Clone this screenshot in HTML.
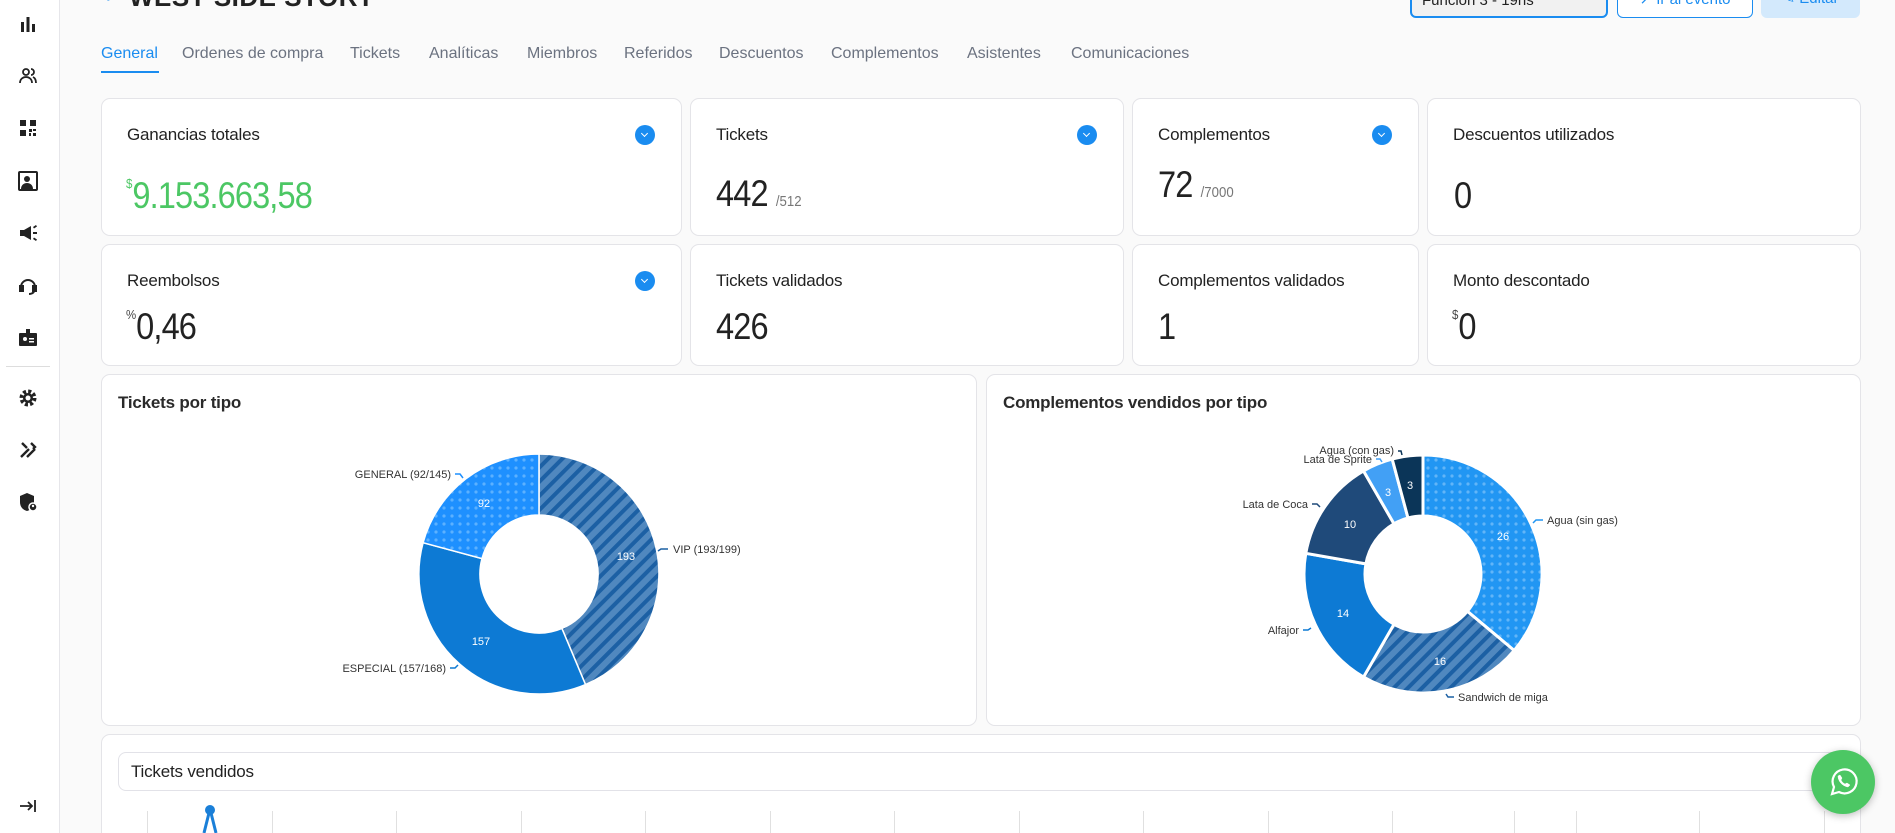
<!DOCTYPE html>
<html style="width:1895px;height:833px;overflow:hidden"><head><meta charset="utf-8">
<style>
*{box-sizing:border-box;margin:0;padding:0}
body{width:1895px;height:833px;overflow:hidden;background:#fafafa;font-family:"Liberation Sans",sans-serif;position:relative;color:#1f2328}
.sb{position:absolute;left:0;top:0;width:60px;height:833px;background:#fff;border-right:1px solid #e6e6ea}
.ic{position:absolute;left:18px;width:20px;height:20px}
.card{position:absolute;background:#fff;border:1px solid #e4e4e8;border-radius:9px}
.t{position:absolute;font-size:17px;color:#222;letter-spacing:-0.2px}
.chev{position:absolute;width:20px;height:20px;border-radius:50%;background:#1a8cf0}
.chev:after{content:"";position:absolute;left:7px;top:6px;width:4px;height:4px;border-right:1.8px solid #fff;border-bottom:1.8px solid #fff;transform:rotate(45deg)}
.v{position:absolute;font-size:37px;color:#222;letter-spacing:-1px;line-height:1;transform:scaleX(0.88);transform-origin:left top;white-space:nowrap}
.s{font-size:15px;color:#777;letter-spacing:0}
.tab{position:absolute;top:45px;font-size:16px;color:#6b7280}
.lbl{font-family:"Liberation Sans",sans-serif;font-size:11px;fill:#333}
.in{font-family:"Liberation Sans",sans-serif;font-size:11px;fill:#fff}
.btn{position:absolute;top:-12px;height:30px;border-radius:6px;font-size:15px;line-height:22px;overflow:hidden}
</style></head><body>
<div class="sb">
<svg class="ic" style="top:14px" viewBox="0 0 20 20"><rect x="3" y="8" width="3" height="10" fill="#222"/><rect x="8.5" y="3" width="3" height="15" fill="#222"/><rect x="14" y="10" width="3" height="8" fill="#222"/></svg>
<svg class="ic" style="top:66px" viewBox="0 0 20 20" fill="none" stroke="#222" stroke-width="1.8"><circle cx="8" cy="6" r="3"/><path d="M2 17c0-4 3-6 6-6s6 2 6 6"/><path d="M13 3a3 3 0 0 1 0 6M15 11c2 1 3 3 3 6"/></svg>
<svg class="ic" style="top:118px" viewBox="0 0 20 20" fill="#222"><rect x="2" y="2" width="6" height="6"/><rect x="12" y="2" width="6" height="6"/><rect x="2" y="12" width="6" height="6"/><rect x="11" y="11" width="3" height="3"/><rect x="15" y="15" width="3" height="3"/><rect x="15" y="11" width="3" height="2"/><rect x="11" y="15" width="2" height="3"/></svg>
<svg class="ic" style="top:171px" viewBox="0 0 20 20"><rect x="1" y="1" width="18" height="18" rx="1" fill="none" stroke="#222" stroke-width="2"/><circle cx="9" cy="8" r="3" fill="#222"/><path d="M3 18c0-4 3-6 6-6s6 2 6 6z" fill="#222"/></svg>
<svg class="ic" style="top:223px" viewBox="0 0 20 20" fill="#222"><path d="M2 7h4l7-4v14l-7-4H2z"/><rect x="15" y="9" width="4" height="2"/><path d="M15 4l3-2 1 1.5-3 2zM15 16l3 2 1-1.5-3-2z"/></svg>
<svg class="ic" style="top:275px" viewBox="0 0 20 20" fill="none" stroke="#222" stroke-width="2"><path d="M3 12a7 7 0 0 1 14 0"/><rect x="2" y="11" width="3" height="5" fill="#222"/><rect x="15" y="11" width="3" height="5" fill="#222"/><path d="M16 16c0 2-3 3-5 3"/></svg>
<svg class="ic" style="top:327px" viewBox="0 0 20 20" fill="#222"><rect x="1" y="6" width="18" height="13" rx="1"/><rect x="8" y="2" width="4" height="6"/><circle cx="7" cy="12" r="2" fill="#fff"/><rect x="11" y="11" width="5" height="1.5" fill="#fff"/><rect x="11" y="14" width="5" height="1.5" fill="#fff"/></svg>
<div style="position:absolute;left:6px;top:366px;width:44px;height:1px;background:#ddd"></div>
<svg class="ic" style="top:388px" viewBox="0 0 20 20"><circle cx="10" cy="10" r="6.5" fill="none" stroke="#222" stroke-width="4" stroke-dasharray="3 2.1"/><circle cx="10" cy="10" r="5" fill="#222"/><circle cx="10" cy="10" r="2.5" fill="#fff"/></svg>
<svg class="ic" style="top:440px" viewBox="0 0 20 20" fill="none" stroke="#222" stroke-width="2.4"><path d="M3 17L11 9M9 17L17 9M4 3l5 5M13 3l4 4-2 2"/></svg>
<svg class="ic" style="top:492px" viewBox="0 0 20 20"><path d="M9 1L2 4v6c0 5 3 8 7 9 4-1 7-4 7-9V4z" fill="#222"/><circle cx="15" cy="15" r="4" fill="#222" stroke="#fff" stroke-width="1.5"/><circle cx="15" cy="14" r="1.2" fill="#fff"/></svg>
<svg class="ic" style="top:796px" viewBox="0 0 20 20" fill="none" stroke="#222" stroke-width="1.8"><path d="M2 10h12M10 6l4 4-4 4M17 4v12"/></svg>
</div>

<div style="position:absolute;left:103px;top:-18px;font-size:22px;color:#1a8cf0">‹</div>
<div style="position:absolute;left:129px;top:-18px;font-size:26px;font-weight:bold;color:#222;letter-spacing:0.5px">WEST SIDE STORY</div>
<div class="btn" style="left:1410px;width:198px;border:2px solid #1a8cf0;background:#f1f1f1;padding:0 10px;color:#222">Función 3 - 19hs</div>
<div class="btn" style="left:1617px;width:136px;border:1px solid #1a8cf0;background:#fff;text-align:center;color:#1a8cf0">↗ Ir al evento</div>
<div class="btn" style="left:1761px;width:99px;background:#d3e9fc;text-align:center;color:#1a8cf0">✎ Editar</div>

<div class="tab" style="left:101px;color:#1a8cf0">General</div>
<div style="position:absolute;left:101px;top:71px;width:58px;height:2px;background:#1a8cf0"></div>
<div class="tab" style="left:182px">Ordenes de compra</div>
<div class="tab" style="left:350px">Tickets</div>
<div class="tab" style="left:429px">Analíticas</div>
<div class="tab" style="left:527px">Miembros</div>
<div class="tab" style="left:624px">Referidos</div>
<div class="tab" style="left:719px">Descuentos</div>
<div class="tab" style="left:831px">Complementos</div>
<div class="tab" style="left:967px">Asistentes</div>
<div class="tab" style="left:1071px">Comunicaciones</div>

<div class="card" style="left:101px;top:98px;width:581px;height:138px">
 <div class="t" style="left:25px;top:26px">Ganancias totales</div><div class="chev" style="left:533px;top:26px"></div>
 <div class="v" style="left:24px;top:78px;color:#4cc764"><span class="s" style="color:#4cc764;vertical-align:top;font-size:13px">$</span>9.153.663,58</div>
</div>
<div class="card" style="left:690px;top:98px;width:434px;height:138px">
 <div class="t" style="left:25px;top:26px">Tickets</div><div class="chev" style="left:386px;top:26px"></div>
 <div class="v" style="left:25px;top:76px">442 <span class="s">/512</span></div>
</div>
<div class="card" style="left:1132px;top:98px;width:287px;height:138px">
 <div class="t" style="left:25px;top:26px">Complementos</div><div class="chev" style="left:239px;top:26px"></div>
 <div class="v" style="left:25px;top:67px">72 <span class="s">/7000</span></div>
</div>
<div class="card" style="left:1427px;top:98px;width:434px;height:138px">
 <div class="t" style="left:25px;top:26px">Descuentos utilizados</div>
 <div class="v" style="left:26px;top:78px">0</div>
</div>

<div class="card" style="left:101px;top:244px;width:581px;height:122px">
 <div class="t" style="left:25px;top:26px">Reembolsos</div><div class="chev" style="left:533px;top:26px"></div>
 <div class="v" style="left:24px;top:63px"><span class="s" style="vertical-align:top;font-size:13px;color:#444">%</span>0,46</div>
</div>
<div class="card" style="left:690px;top:244px;width:434px;height:122px">
 <div class="t" style="left:25px;top:26px">Tickets validados</div>
 <div class="v" style="left:25px;top:63px">426</div>
</div>
<div class="card" style="left:1132px;top:244px;width:287px;height:122px">
 <div class="t" style="left:25px;top:26px">Complementos validados</div>
 <div class="v" style="left:25px;top:63px">1</div>
</div>
<div class="card" style="left:1427px;top:244px;width:434px;height:122px">
 <div class="t" style="left:25px;top:26px">Monto descontado</div>
 <div class="v" style="left:24px;top:63px"><span class="s" style="vertical-align:top;font-size:13px;color:#444">$</span>0</div>
</div>

<div class="card" style="left:101px;top:374px;width:876px;height:352px">
 <div class="t" style="left:16px;top:18px;font-weight:bold;color:#2a2a2a">Tickets por tipo</div>
</div>
<div class="card" style="left:986px;top:374px;width:875px;height:352px">
 <div class="t" style="left:16px;top:18px;font-weight:bold;color:#2a2a2a">Complementos vendidos por tipo</div>
</div>

<svg style="position:absolute;left:0;top:0" width="1895" height="833">
<defs>
<pattern id="dots" width="8" height="8" patternUnits="userSpaceOnUse"><rect width="8" height="8" fill="#1e90ff"/><circle cx="4" cy="4" r="1.6" fill="#5cb1ff"/></pattern>
<pattern id="dots2" width="8" height="8" patternUnits="userSpaceOnUse"><rect width="8" height="8" fill="#2196f3"/><circle cx="4" cy="4" r="1.6" fill="#62b5f8"/></pattern>
<pattern id="str" width="10" height="10" patternUnits="userSpaceOnUse" patternTransform="rotate(-45)"><rect width="10" height="10" fill="#5088bf"/><rect width="10" height="4" fill="#1c60a4"/></pattern>
</defs>
<g stroke="#fff" stroke-width="1.5">
<path d="M539,454 A120,120 0 0 1 585.5,684.6 L561.9,628.4 A59,59 0 0 0 539,515 Z" fill="url(#str)"/>
<path d="M585.5,684.6 A120,120 0 0 1 423.1,542.7 L482,558.6 A59,59 0 0 0 561.9,628.4 Z" fill="#0d7ad4"/>
<path d="M423.1,542.7 A120,120 0 0 1 539,454 L539,515 A59,59 0 0 0 482,558.6 Z" fill="url(#dots)"/>
</g>
<text class="in" x="484" y="507" text-anchor="middle">92</text>
<text class="in" x="626" y="560" text-anchor="middle">193</text>
<text class="in" x="481" y="645" text-anchor="middle">157</text>
<text class="lbl" x="451" y="478" text-anchor="end">GENERAL (92/145)</text>
<text class="lbl" x="673" y="553">VIP (193/199)</text>
<text class="lbl" x="446" y="672" text-anchor="end">ESPECIAL (157/168)</text>
<path d="M455,474h5l3,4" stroke="#1e90ff" stroke-width="1.5" fill="none"/>
<path d="M668,549h-7l-3,2" stroke="#1c60a4" stroke-width="1.5" fill="none"/>
<path d="M450,668h5l3,-3" stroke="#0d7ad4" stroke-width="1.5" fill="none"/>

<g stroke="#fff" stroke-width="3">
<path d="M1423,455 A119,119 0 0 1 1514.2,650.5 L1467.4,611.3 A58,58 0 0 0 1423,516 Z" fill="url(#dots2)"/>
<path d="M1514.2,650.5 A119,119 0 0 1 1363.5,677.1 L1394,624.2 A58,58 0 0 0 1467.4,611.3 Z" fill="url(#str)"/>
<path d="M1363.5,677.1 A119,119 0 0 1 1305.8,553.3 L1365.9,563.9 A58,58 0 0 0 1394,624.2 Z" fill="#0d7ad4"/>
<path d="M1305.8,553.3 A119,119 0 0 1 1363.5,470.9 L1394,523.8 A58,58 0 0 0 1365.9,563.9 Z" fill="#1f4a7a"/>
<path d="M1363.5,470.9 A119,119 0 0 1 1392.2,459.1 L1408,518 A58,58 0 0 0 1394,523.8 Z" fill="#42a0f5"/>
<path d="M1392.2,459.1 A119,119 0 0 1 1423,455 L1423,516 A58,58 0 0 0 1408,518 Z" fill="#0b3558"/>
</g>
<text class="in" x="1503" y="540" text-anchor="middle">26</text>
<text class="in" x="1440" y="665" text-anchor="middle">16</text>
<text class="in" x="1343" y="617" text-anchor="middle">14</text>
<text class="in" x="1350" y="528" text-anchor="middle">10</text>
<text class="in" x="1388" y="496" text-anchor="middle">3</text>
<text class="in" x="1410" y="489" text-anchor="middle">3</text>
<text class="lbl" x="1547" y="524">Agua (sin gas)</text>
<text class="lbl" x="1458" y="701">Sandwich de miga</text>
<text class="lbl" x="1299" y="634" text-anchor="end">Alfajor</text>
<text class="lbl" x="1308" y="508" text-anchor="end">Lata de Coca</text>
<text class="lbl" x="1372" y="463" text-anchor="end">Lata de Sprite</text>
<text class="lbl" x="1394" y="454" text-anchor="end">Agua (con gas)</text>
<path d="M1543,520h-7l-3,3" stroke="#2196f3" stroke-width="1.5" fill="none"/>
<path d="M1454,697h-6l-2,-3" stroke="#1c60a4" stroke-width="1.5" fill="none"/>
<path d="M1303,630h5l3,-2" stroke="#0d7ad4" stroke-width="1.5" fill="none"/>
<path d="M1312,504h5l3,3" stroke="#1f4a7a" stroke-width="1.5" fill="none"/>
<path d="M1376,459h4l2,3" stroke="#42a0f5" stroke-width="1.5" fill="none"/>
<path d="M1398,451h3l1,4" stroke="#0b3558" stroke-width="1.5" fill="none"/>
</svg>

<div class="card" style="left:101px;top:734px;width:1760px;height:110px">
 <div style="position:absolute;left:16px;top:17px;width:1733px;height:39px;border:1px solid #e2e2e8;border-radius:8px"></div>
 <div class="t" style="left:29px;top:27px">Tickets vendidos</div>
</div>
<svg style="position:absolute;left:0;top:805px" width="1895" height="28">
<g stroke="#e0e0e0" stroke-width="1">
<path d="M147.5,6V28M272.5,6V28M396.5,6V28M521.5,6V28M645.5,6V28M770.5,6V28M894.5,6V28M1019.5,6V28M1143.5,6V28M1268.5,6V28M1392.5,6V28M1514.5,6V28M1576.5,6V28M1699.5,6V28M1824.5,6V28"/>
</g>
<path d="M210,4L204,28M210,4L216,28" stroke="#1a7fd8" stroke-width="3" fill="none"/>
<circle cx="210" cy="5" r="5" fill="#1a7fd8"/>
</svg>

<div style="position:absolute;left:1811px;top:750px;width:64px;height:64px;border-radius:50%;background:#4cc764;box-shadow:0 2px 8px rgba(0,0,0,.25)">
<svg width="64" height="64" viewBox="0 0 64 64" fill="none" stroke="#fff" stroke-width="2.2"><path d="M21 44l2-7a12 12 0 1 1 5 5z"/><path d="M27 26c0 5 4 10 10 11l2-2-3-2-2 1c-2-1-3-2-4-4l1-2-2-3z" fill="#fff" stroke-width="0.5"/></svg>
</div>
</body></html>
